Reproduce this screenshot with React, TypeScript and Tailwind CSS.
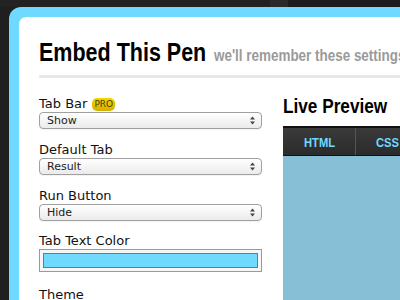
import React from "react";

const bold = { fontFamily: '"Liberation Sans", Arial, sans-serif' };

function Cond({ w, className, children }: { w: string; className: string; children: React.ReactNode }) {
  return (
    <span className={`inline-block overflow-visible whitespace-nowrap ${w}`} style={bold}>
      <span className={`inline-block origin-left font-bold ${className}`}>{children}</span>
    </span>
  );
}

function Select({ value }: { value: string }) {
  return (
    <div className="flex h-[17px] w-[223px] items-center justify-between rounded-[4px] border border-[#a0a0a0] bg-gradient-to-b from-[#ffffff] to-[#ebebeb] pl-[7px] pr-[6px] text-[11px] leading-none text-[#222] shadow-[0_1px_0_#f4f4f4]">
      <span>{value}</span>
      <svg width="5" height="9" viewBox="0 0 5 9">
        <path d="M0 3.5 L2.5 0.5 L5 3.5 Z" fill="#444" />
        <path d="M0 5.5 L2.5 8.5 L5 5.5 Z" fill="#444" />
      </svg>
    </div>
  );
}

function Label({ children }: { children: React.ReactNode }) {
  return <div className="flex h-[16px] items-center gap-[5px] text-[13px] leading-[16px] text-[#111]">{children}</div>;
}

export default function App() {
  return (
    <div className="h-[300px] w-[400px] overflow-hidden bg-[#1f1f1f]" style={{ fontFamily: '"DejaVu Sans", "Liberation Sans", sans-serif' }}>
      <div className="flex h-[7px]">
        <div className="w-[270px] bg-[#222222]" />
        <div className="w-[18px] bg-[#2a2a2a]" />
        <div className="flex-1 bg-[#1c1c1c]" />
      </div>
      <div className="pl-[9px]">
        <div className="h-[320px] rounded-tl-[12px] bg-[#70d9ff] pl-[10px] pt-[10px]">
          <div className="h-[320px] rounded-tl-[7px] bg-white pl-[20px] pt-[22px]">
            <div className="flex items-baseline gap-[10px]">
              <Cond w="w-[165px]" className="scale-x-[0.86] text-[25px] leading-[26px] text-black">Embed This Pen</Cond>
              <Cond w="w-[190px]" className="scale-x-[0.84] text-[16px] text-[#9a9a9a]">we'll remember these settings</Cond>
            </div>
            <div className="mt-[7px] h-[3px] bg-[#e8e8e8]" />
            <div className="mt-[18px] flex gap-[21px]">
              <div className="flex w-[223px] flex-col">
                <Label>
                  Tab Bar
                  <span className="rounded-[5px] bg-gradient-to-b from-[#f4d600] to-[#d2b000] px-[2px] text-[9px] leading-[13px] text-[#4a3c00]">PRO</span>
                </Label>
                <div className="mt-[0px]"><Select value="Show" /></div>
                <div className="mt-[13px]"><Label>Default Tab</Label></div>
                <div className="mt-[0px]"><Select value="Result" /></div>
                <div className="mt-[13px]"><Label>Run Button</Label></div>
                <div className="mt-[0px]"><Select value="Hide" /></div>
                <div className="mt-[12px]"><Label>Tab Text Color</Label></div>
                <div className="mt-[0px] h-[23px] w-[223px] border border-[#999] bg-[#f6f6f6] p-[3px]">
                  <div className="h-full w-full border border-[#777] bg-[#70d9ff]" />
                </div>
                <div className="mt-[15px]"><Label>Theme</Label></div>
              </div>
              <div className="flex flex-1 flex-col">
                <Cond w="w-[106px]" className="scale-x-[0.86] text-[20px] leading-[20px] text-black">Live Preview</Cond>
                <div className="mt-[6px] flex h-[30px] border-t-2 border-b border-[#111] bg-gradient-to-b from-[#3a3a3a] to-[#2b2b2b]">
                  <div className="flex w-[73px] items-center justify-center border-r border-[#555]">
                    <Cond w="w-[31px]" className="scale-x-[0.86] text-[13px] text-[#70d9ff]">HTML</Cond>
                  </div>
                  <div className="flex flex-1 items-center pl-[20px]">
                    <Cond w="w-[26px]" className="scale-x-[0.86] text-[13px] text-[#70d9ff]">CSS</Cond>
                  </div>
                </div>
                <div className="h-[200px] bg-[#86bfd6]" />
              </div>
            </div>
          </div>
        </div>
      </div>
    </div>
  );
}
